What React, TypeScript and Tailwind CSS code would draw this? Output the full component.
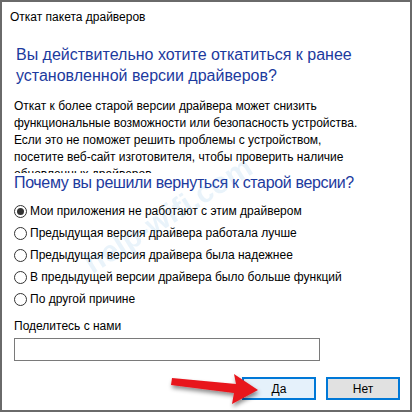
import React from "react";

const font = { fontFamily: '"Liberation Sans", Arial, sans-serif' };

function Radio({ checked, label }: { checked?: boolean; label: string }) {
  return (
    <div className="flex items-center h-[22px]">
      <span className="w-[13px] h-[13px] rounded-full border border-[#333] flex items-center justify-center bg-white shrink-0">
        {checked && <span className="w-[7px] h-[7px] rounded-full bg-[#333]" />}
      </span>
      <span className="ml-[3px] text-[12px] text-black whitespace-nowrap">{label}</span>
    </div>
  );
}

export default function App() {
  return (
    <div className="w-[412px] h-[412px] bg-white border-2 border-[#6a6a6a] relative overflow-hidden" style={font}>
      <div className="pl-[8px] h-[29px] flex items-center text-[12px] text-black">Откат пакета драйверов</div>
      <div className="pl-[12px] pr-[10px]">
        <div className="mt-[13px] h-[42px] text-[16px] leading-[21px] text-[#1c3a9e] pl-[2px]">
          Вы действительно хотите откатиться к ранее<br />установленной версии драйверов?
        </div>
        <div className="mt-[12px] h-[75px] overflow-hidden text-[12px] leading-[17px] text-black">
          Откат к более старой версии драйвера может снизить<br />
          функциональные возможности или безопасность устройства.<br />
          Если это не поможет решить проблемы с устройством,<br />
          посетите веб-сайт изготовителя, чтобы проверить наличие<br />
          обновленных драйверов.
        </div>
        <div className="h-[20px] text-[16px] leading-[20px] tracking-[-0.35px] text-[#1c3a9e] whitespace-nowrap">Почему вы решили вернуться к старой версии?</div>
        <div className="mt-[7px] flex flex-col">
          <Radio checked label="Мои приложения не работают с этим драйвером" />
          <Radio label="Предыдущая версия драйвера работала лучше" />
          <Radio label="Предыдущая версия драйвера была надежнее" />
          <Radio label="В предыдущей версии драйвера было больше функций" />
          <Radio label="По другой причине" />
        </div>
        <div className="mt-[8px] h-[16px] leading-[16px] text-[12px] text-black">Поделитесь с нами</div>
        <div className="mt-[4px] w-[306px] h-[23px] border border-[#7a7a7a]" />
        <div className="mt-[16px] flex justify-end gap-[10px]">
          <button className="w-[74px] h-[23px] border-2 border-[#0078d7] bg-[#e5f1fb] text-[12px] text-black flex items-center justify-center">Да</button>
          <button className="w-[74px] h-[23px] border-2 border-[#0078d7] bg-[#e1e1e1] text-[12px] text-black flex items-center justify-center">Нет</button>
        </div>
      </div>
      <div className="absolute left-[70px] top-[190px] -rotate-[32deg] text-[30px] font-bold text-[#2f8fd8] opacity-[0.1] pointer-events-none">help-wifi.com</div>
      <svg className="absolute left-0 top-0 pointer-events-none" width="412" height="412">
        <defs>
          <filter id="sh" x="-20%" y="-50%" width="140%" height="200%">
            <feDropShadow dx="1" dy="3" stdDeviation="2" floodColor="#000" floodOpacity="0.45" />
          </filter>
        </defs>
        <g filter="url(#sh)" transform="translate(-2,-2)">
          <polygon points="172,378 236,384 234,374 258,390 232,404 234,393 171,385" fill="#e8141c" />
        </g>
      </svg>
    </div>
  );
}
